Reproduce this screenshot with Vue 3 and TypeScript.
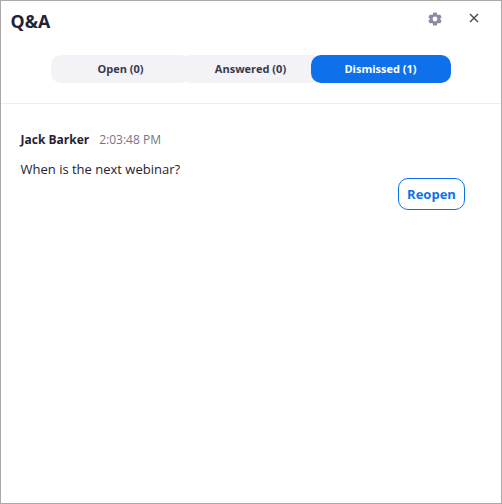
<script setup lang="ts">
import { ref } from 'vue'

interface Tab {
  label: string
  count: number
}

const tabs: Tab[] = [
  { label: 'Open', count: 0 },
  { label: 'Answered', count: 0 },
  { label: 'Dismissed', count: 1 },
]
const active = ref('Dismissed')
</script>

<template>
  <main class="window">
    <header class="header">
      <h1 class="title">Q&amp;A</h1>
      <button class="icon-button" aria-label="Settings">
        <svg class="gear" viewBox="0 0 14 14">
          <path
            fill-rule="evenodd"
            d="M5.2 .5h3.6l.4 1.9 1 .6 1.9-.6 1.6 2.8-1.4 1.3v1l1.4 1.3-1.6 2.8-1.9-.6-1 .6-.4 1.9H5.2l-.4-1.9-1-.6-1.9.6L.3 8.8l1.4-1.3v-1L.3 5.2l1.6-2.8 1.9.6 1-.6zM7 4.6a2.4 2.4 0 1 0 0 4.8 2.4 2.4 0 0 0 0-4.8z"
          />
        </svg>
      </button>
      <button class="icon-button" aria-label="Close">
        <svg class="close" viewBox="0 0 10 10">
          <path d="M1 1l8 8M9 1L1 9" />
        </svg>
      </button>
    </header>
    <nav class="tabs">
      <button
        v-for="tab in tabs"
        :key="tab.label"
        class="tab"
        :class="{ active: tab.label === active }"
        @click="active = tab.label"
      >
        {{ tab.label }} ({{ tab.count }})
      </button>
    </nav>
    <section class="question">
      <div class="meta">
        <span class="author">Jack Barker</span>
        <time class="time">2:03:48 PM</time>
      </div>
      <p class="text">When is the next webinar?</p>
      <button class="reopen">Reopen</button>
    </section>
  </main>
</template>

<style>
body {
  margin: 0;
  background: #fff;
}
</style>

<style scoped>
.window {
  box-sizing: border-box;
  height: 504px;
  border: 1px solid #a9a9a9;
  background: #fff;
  color: #232333;
  font-family: 'Open Sans', sans-serif;
  overflow: hidden;
}
button {
  padding: 0;
  border: 0;
  background: none;
  font-family: inherit;
}
.header {
  display: flex;
  align-items: center;
  height: 34px;
  padding: 0 19px 0 9.5px;
}
.title {
  flex: 1;
  margin: 6px 0 0;
  font-size: 17.75px;
  line-height: 24px;
  font-weight: 700;
}
.icon-button {
  display: flex;
  width: 14px;
  height: 14px;
  align-items: center;
  justify-content: center;
}
.icon-button + .icon-button {
  margin-left: 24px;
  width: 16px;
}
.gear {
  width: 14px;
  height: 14px;
  margin-top: 1px;
  fill: #8b8ba4;
}
.close {
  width: 10px;
  height: 10px;
  fill: none;
  stroke: #484848;
  stroke-width: 1.4;
}
.tabs {
  display: flex;
  padding: 20px 50px;
  border-bottom: 1px solid #ededf0;
}
.tab {
  width: 140px;
  height: 28px;
  padding-right: 1px;
  border-radius: 10px;
  background: #f2f2f7;
  color: #39394d;
  font-size: 11px;
  line-height: 28px;
  font-weight: 700;
}
.tab + .tab {
  margin-left: -10px;
}
.tab.active {
  background: #0e71eb;
  color: #fff;
}
.question {
  display: flex;
  flex-direction: column;
  padding: 27px 36px 0 19.5px;
}
.meta {
  display: flex;
  gap: 10px;
  font-size: 12px;
  line-height: 18px;
}
.author {
  font-weight: 700;
}
.time {
  color: #747487;
}
.text {
  margin: 10px 0 0;
  font-size: 13px;
  line-height: 20px;
}
.reopen {
  align-self: flex-end;
  box-sizing: border-box;
  width: 67px;
  height: 32px;
  margin-top: -1px;
  border: 1px solid #0e71eb;
  border-radius: 10px;
  color: #0e71eb;
  font-size: 13px;
  line-height: 30px;
  font-weight: 700;
}
</style>
